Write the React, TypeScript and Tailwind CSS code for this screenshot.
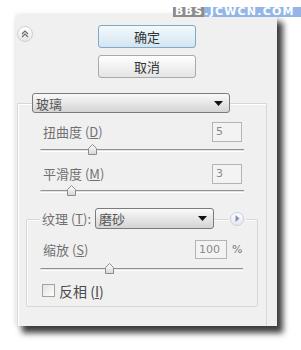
import React from 'react';

const cjk = "font-['Noto_Sans_CJK_SC',sans-serif]";

const Thumb: React.FC = () => (
    <svg width="9" height="11" viewBox="0 0 9 11">
        <defs>
            <linearGradient id="thumbFill" x1="0" y1="0" x2="0" y2="1">
                <stop offset="0" stopColor="#ffffff" />
                <stop offset="1" stopColor="#d6d6d6" />
            </linearGradient>
        </defs>
        <path d="M4.5 0.5 L8.5 4.5 L8.5 10.5 L0.5 10.5 L0.5 4.5 Z" fill="url(#thumbFill)" stroke="#8c8c8c" strokeWidth="1" />
    </svg>
);

const Slider: React.FC<{ pos: number; className?: string }> = ({ pos, className }) => (
    <div className={`relative h-[10px] ${className ?? ''}`}>
        <div className="absolute left-0 right-0 top-[4px] h-[3px] rounded-l-full border-t border-[#909090] border-b border-b-white bg-[#e4e4e4]" />
        <div className="absolute top-[-1px]" style={{ left: pos - 4 }}>
            <Thumb />
        </div>
    </div>
);

const Arrow: React.FC = () => (
    <svg width="9" height="5" viewBox="0 0 9 5">
        <path d="M0 0 H9 L4.5 5 Z" fill="#111" />
    </svg>
);

const Select: React.FC<{ label: string; className: string }> = ({ label, className }) => (
    <div className={`flex items-center justify-between rounded-[3px] border border-[#7b7b7b] bg-gradient-to-b from-[#fafafa] to-[#d4d4d4] pl-[3px] pr-[6px] ${className}`}>
        <span className="text-[13px] leading-none text-[#555]">{label}</span>
        <Arrow />
    </div>
);

const NumBox: React.FC<{ value: string; className: string }> = ({ value, className }) => (
    <div className={`flex items-center border border-[#b4b4b4] bg-[#f3f3f3] pl-[3px] font-['DejaVu_Sans',sans-serif] text-[11px] text-[#8a8a8a] ${className}`}>
        {value}
    </div>
);

const App: React.FC = () => {
    return (
        <div className={`relative w-[301px] h-[350px] overflow-hidden bg-white ${cjk}`}>
            {/* watermark */}
            <div className="absolute top-[7px] left-[173px] z-20 flex h-[10px] font-['DejaVu_Sans',sans-serif] text-[11px] font-bold leading-[10px] tracking-[1.2px] text-white">
                <span className="bg-[#8d8d8d] pl-[2px] pr-[1px]">BBS</span>
                <span className="bg-[#94b6e6] pr-[9px]">.JCWCN.COM</span>
            </div>

            <div className="pl-[16px] pt-[15px]">
                <div className="flex h-[311px] w-[261px] flex-col bg-[#f0f0f0] shadow-[6px_7px_6px_rgba(0,0,0,0.75),0_0_5px_rgba(0,0,0,0.15)]">
                    {/* top buttons */}
                    <div className="flex pt-[10px]">
                        <div className="ml-[1px] mt-[1px] flex h-[16px] w-[16px] items-center justify-center rounded-full border border-[#cfcfcf] bg-gradient-to-b from-white to-[#e6e6e6]">
                            <svg width="8" height="8" viewBox="0 0 8 8">
                                <path d="M1 4 L4 1 L7 4 M1 7 L4 4 L7 7" fill="none" stroke="#6a6a6a" strokeWidth="1.2" />
                            </svg>
                        </div>
                        <div className="ml-[65px] flex flex-col gap-[7px]">
                            <div className="flex h-[23px] w-[98px] items-center justify-center rounded-[3px] border border-[#7ea9c9] bg-gradient-to-b from-[#f4f9fc] to-[#d3e5f0] text-[13px] text-[#333]">
                                确定
                            </div>
                            <div className="flex h-[23px] w-[98px] items-center justify-center rounded-[3px] border border-[#a9a9a9] bg-gradient-to-b from-white to-[#e4e4e4] text-[13px] text-[#333]">
                                取消
                            </div>
                        </div>
                    </div>

                    {/* glass group */}
                    <div className="ml-[1px] mt-[25px] flex w-[250px] flex-1 flex-col border border-b-0 border-[#d7d7d7] shadow-[inset_1px_1px_0_#ffffff]">
                        <Select label="玻璃" className="-mt-[11px] ml-[14px] h-[20px] w-[198px]" />

                        <div className="ml-[25px] mt-[9px] flex w-[199px] items-center justify-between">
                            <span className="text-[13px] text-[#707070]">扭曲度 (<u>D</u>)</span>
                            <NumBox value="5" className="h-[20px] w-[30px]" />
                        </div>
                        <Slider pos={52} className="ml-[22px] mt-[3px] w-[204px]" />

                        <div className="ml-[25px] mt-[9px] flex w-[199px] items-center justify-between">
                            <span className="text-[13px] text-[#707070]">平滑度 (<u>M</u>)</span>
                            <NumBox value="3" className="h-[20px] w-[30px]" />
                        </div>
                        <Slider pos={31} className="ml-[22px] mt-[2px] w-[204px]" />

                        {/* texture group */}
                        <div className="ml-[8px] mt-[23px] flex h-[88px] w-[232px] flex-col rounded-[2px] border border-[#d7d7d7] shadow-[inset_1px_1px_0_#ffffff]">
                            <div className="-mt-[12px] flex items-center">
                                <span className="ml-[13px] w-[54px] bg-[#f0f0f0] pl-[2px] text-[13px] text-[#707070]">
                                    纹理 (<u>T</u>):
                                </span>
                                <Select label="磨砂" className="ml-[1px] h-[21px] w-[119px]" />
                                <div className="ml-[16px] flex h-[14px] w-[14px] items-center justify-center rounded-full border border-[#c9cfe0] bg-gradient-to-b from-white to-[#e4e7f0] shadow-[0_0_0_2px_#f0f0f0]">
                                    <svg width="5" height="7" viewBox="0 0 5 7">
                                        <path d="M0.5 0 L4.5 3.5 L0.5 7 Z" fill="#8a90b8" />
                                    </svg>
                                </div>
                            </div>

                            <div className="ml-[16px] mt-[11px] flex items-center">
                                <span className="w-[152px] text-[13px] text-[#707070]">缩放 (<u>S</u>)</span>
                                <NumBox value="100" className="h-[19px] w-[32px]" />
                                <span className="ml-[5px] font-['DejaVu_Sans',sans-serif] text-[11px] text-[#777]">%</span>
                            </div>
                            <Slider pos={69} className="ml-[13px] mt-[4px] w-[203px]" />

                            <div className="ml-[15px] mt-[10px] flex items-center">
                                <div className="h-[13px] w-[13px] border border-[#a2a2a2] bg-gradient-to-br from-[#e2e2e2] to-white" />
                                <span className="ml-[4px] text-[14px] leading-none text-[#4a4a4a]">反相 (<u>I</u>)</span>
                            </div>
                        </div>
                    </div>
                </div>
            </div>
        </div>
    );
};

export default App;
